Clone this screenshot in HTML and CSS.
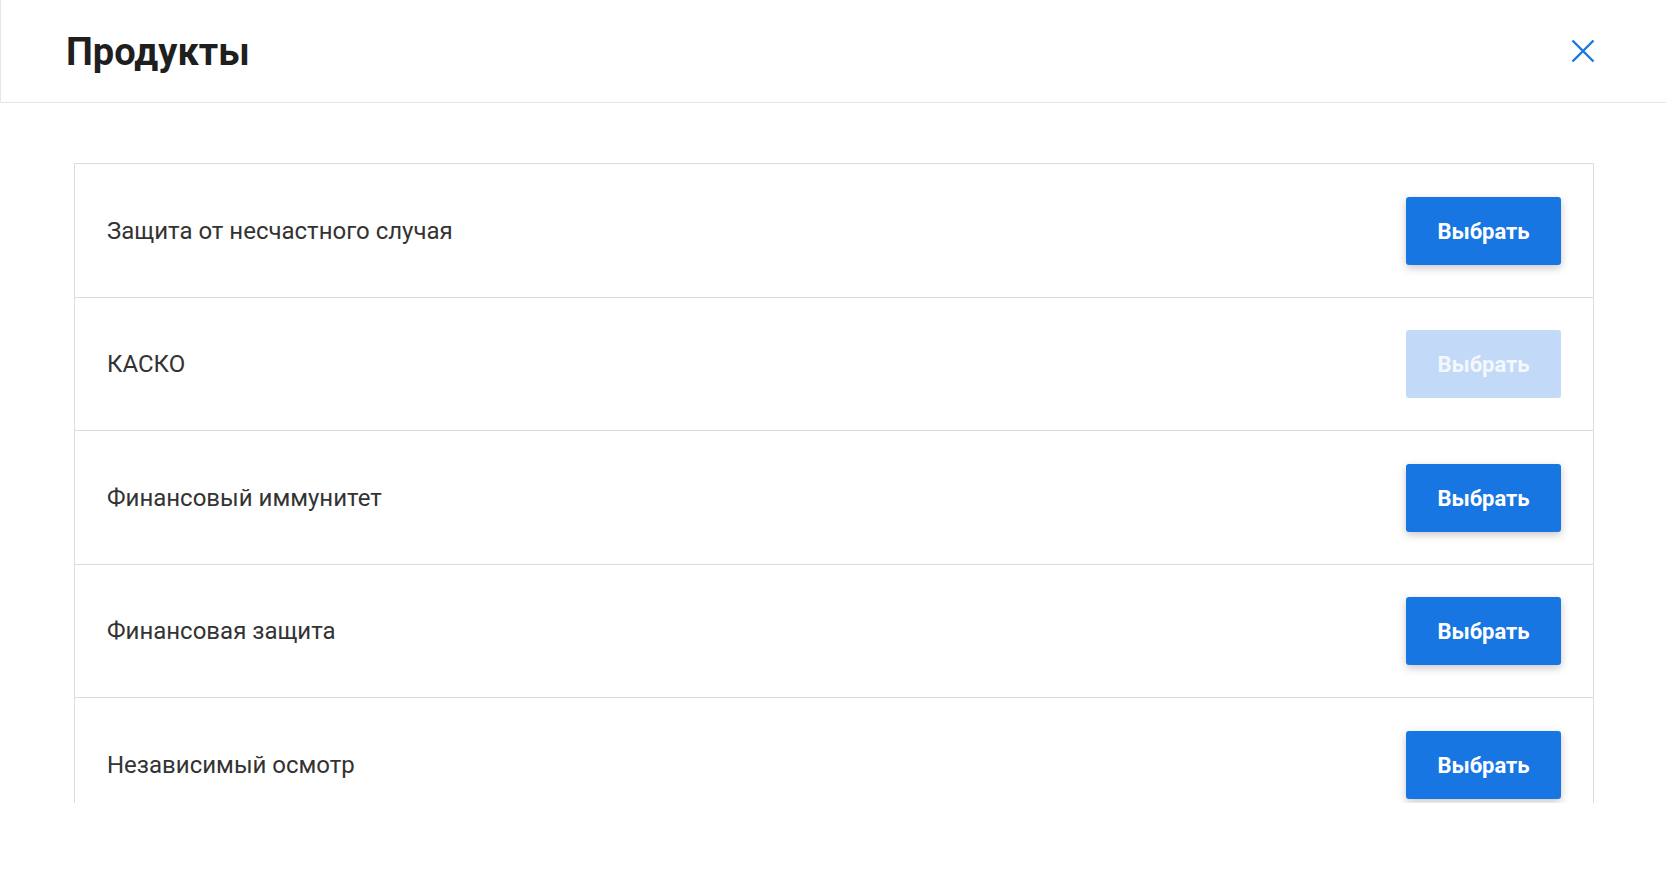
FILE: index.html
```html
<!DOCTYPE html>
<html lang="ru">
<head>
<meta charset="utf-8">
<title>Продукты</title>
<link rel="stylesheet" href="styles.css">
</head>
<body>
<div class="page">
  <header class="header">
    <h1 class="title">Продукты</h1>
    <button class="close" aria-label="Закрыть">
      <svg width="24" height="24" viewBox="0 0 24 24"><path d="M1.5 1.5 L22.5 22.5 M22.5 1.5 L1.5 22.5" stroke="#1976e2" stroke-width="2.4" fill="none"/></svg>
    </button>
  </header>
  <main class="content">
    <div class="scroller">
      <ul class="list">
        <li class="row"><span class="label">Защита от несчастного случая</span><button class="btn">Выбрать</button></li>
        <li class="row"><span class="label">КАСКО</span><button class="btn btn-disabled" disabled>Выбрать</button></li>
        <li class="row"><span class="label">Финансовый иммунитет</span><button class="btn">Выбрать</button></li>
        <li class="row"><span class="label">Финансовая защита</span><button class="btn">Выбрать</button></li>
        <li class="row"><span class="label">Независимый осмотр</span><button class="btn">Выбрать</button></li>
      </ul>
    </div>
  </main>
</div>
</body>
</html>
```

FILE: styles.css
```css
* { box-sizing: border-box; }
html, body { margin: 0; padding: 0; background: #fff; }
body { font-family: Roboto, "Noto Sans", "Liberation Sans", sans-serif; }
.page { width: 1666px; height: 882px; overflow: hidden; }
.header {
  height: 103px;
  border-left: 1px solid #e6e6e6;
  border-bottom: 1px solid #e6e6e6;
  display: flex;
  align-items: center;
  justify-content: space-between;
  padding: 0 71px 0 65px;
}
.title {
  margin: 0;
  font-size: 38px;
  font-weight: 700;
  color: #1f1f1f;
  line-height: 1;
  padding-top: 2px;
}
.close {
  background: none;
  border: 0;
  padding: 0;
  width: 24px;
  height: 24px;
  cursor: pointer;
  display: flex;
}
.content { padding: 60px 72px 0 74px; }
.scroller { height: 640px; overflow: hidden; }
.list {
  list-style: none;
  margin: 0;
  padding: 0;
  border: 1px solid #dcdcdc;
  border-bottom: 0;
}
.row {
  display: flex;
  align-items: center;
  justify-content: space-between;
  padding: 32.5px 32px 32px 32px;
  border-bottom: 1px solid #dcdcdc;
}
.label {
  font-size: 24px;
  color: #333;
  line-height: 1;
}
.btn {
  font-family: Roboto, "Noto Sans", "Liberation Sans", sans-serif;
  width: 155px;
  height: 68px;
  border: 0;
  border-radius: 3px;
  background: #1876e3;
  color: #fff;
  font-size: 22px;
  font-weight: 700;
  padding-top: 2px;
  box-shadow: 0 3px 8px rgba(0, 0, 0, 0.22);
  cursor: pointer;
}
.btn-disabled {
  background: #c2d9f7;
  color: #f4f8fe;
  box-shadow: none;
  cursor: default;
}
```
